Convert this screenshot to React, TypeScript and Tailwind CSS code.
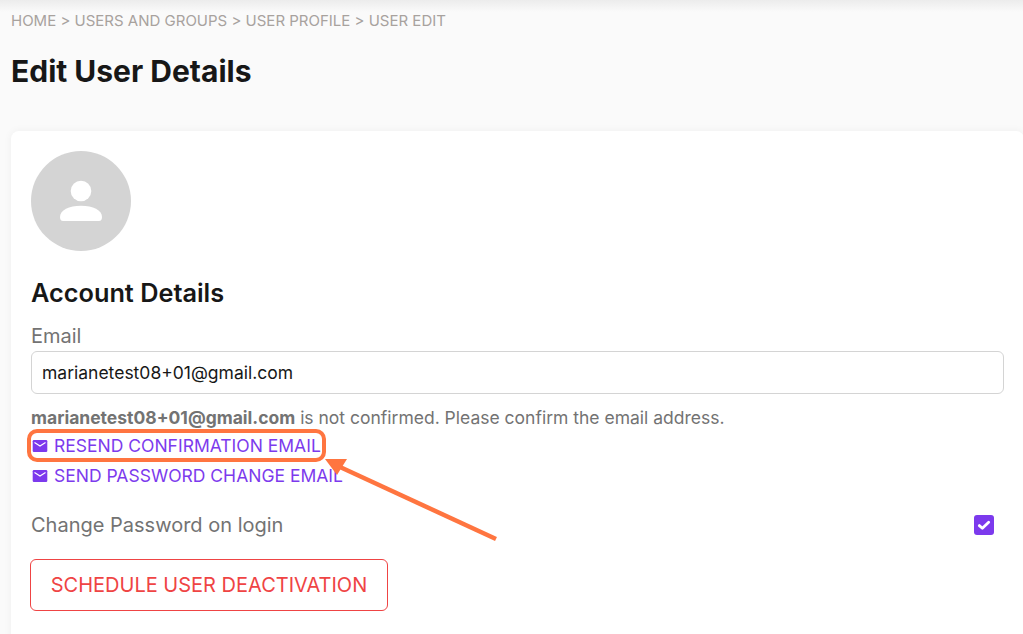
import React from 'react';

const MailIcon = () => (
  <svg className="w-4 h-4 ml-px mr-[6px] shrink-0" viewBox="0 0 16 16">
    <rect x="0.700" y="2" width="14.600" height="12" rx="1.200" fill="#7c3aed" />
    <path d="M2.500 4.600 8 8l5.500-3.400" fill="none" stroke="#ffffff" strokeWidth="1.200" />
  </svg>
);

const App = () => {
  return (
    <div className="relative h-[634px] overflow-hidden bg-[#fafafa] font-['Inter',sans-serif]">
      <div className="h-3 bg-gradient-to-b from-[#ececec] to-[#fafafa] -mb-3" />
      <div className="pl-[11px] pt-[11px]">
        <div className="text-[15px] leading-5 text-[#a8a29e]">HOME &gt; USERS AND GROUPS &gt; USER PROFILE &gt; USER EDIT</div>
        <h1 className="mt-[22px] text-3xl leading-9 font-bold text-[#171717]">Edit User Details</h1>

        <div className="mt-[42px] -mr-px bg-white rounded-lg shadow-[0_0_8px_rgba(0,0,0,0.05)] p-5 h-[600px]">
          <div className="w-[100px] h-[100px] rounded-full bg-[#d4d4d4]">
            <svg className="w-[100px] h-[100px]" viewBox="0 0 100 100" fill="#ffffff">
              <circle cx="50" cy="40" r="10.300" />
              <path d="M29 66c0-7 9-11.300 21-11.300S71 59 71 66c0 2.500-1 4-3 4H32c-2 0-3-1.500-3-4z" />
            </svg>
          </div>

          <h2 className="mt-[26px] text-[25.300px] leading-8 font-semibold text-[#171717]">Account Details</h2>
          <div className="mt-[13px] text-xl leading-7 text-[#737373]">Email</div>
          <div className="mt-px h-[43px] border border-[#d4d4d4] rounded-md flex items-center px-[10px] pt-[2px] text-[17.500px] text-[#171717]">
            marianetest08+01@gmail.com
          </div>

          <p className="mt-3 text-[17.500px] leading-6 text-[#737373]">
            <span className="font-bold">marianetest08+01@gmail.com</span> is not confirmed. Please confirm the email address.
          </p>
          <div className="mt-px flex items-center h-[30px] text-[17.500px] text-[#7c3aed]">
            <MailIcon />
            RESEND CONFIRMATION EMAIL
          </div>
          <div className="flex items-center h-[30px] text-[17.500px] text-[#7c3aed]">
            <MailIcon />
            SEND PASSWORD CHANGE EMAIL
          </div>

          <div className="mt-5 flex items-center justify-between pr-[10px]">
            <span className="text-xl leading-7 text-[#737373]">Change Password on login</span>
            <span className="w-5 h-5 rounded-[3px] bg-[#7c3aed] flex items-center justify-center">
              <svg className="w-[14px] h-[14px]" viewBox="0 0 12 12" fill="none" stroke="#ffffff" strokeWidth="2.400" strokeLinecap="round" strokeLinejoin="round">
                <path d="M2 6.500 4.600 8.800 10 3.600" />
              </svg>
            </span>
          </div>

          <button className="mt-5 -ml-px h-[52px] w-[358px] border border-[#ef4444] rounded-md text-xl text-[#ef4444]">
            SCHEDULE USER DEACTIVATION
          </button>
        </div>
      </div>

      {/* annotation drawn over the screenshot */}
      <div className="absolute left-[27px] top-[429px] w-[299px] h-[33px] border-4 border-[#ff7540] rounded-[10px]" />
      <svg className="absolute left-[320px] top-[450px]" width="185" height="100" viewBox="0 0 185 100" fill="#ff7540">
        <path d="M176 89 20 17" stroke="#ff7540" strokeWidth="4.500" />
        <path d="M5 9 27 9 17 25z" />
      </svg>
    </div>
  );
};

export default App;
